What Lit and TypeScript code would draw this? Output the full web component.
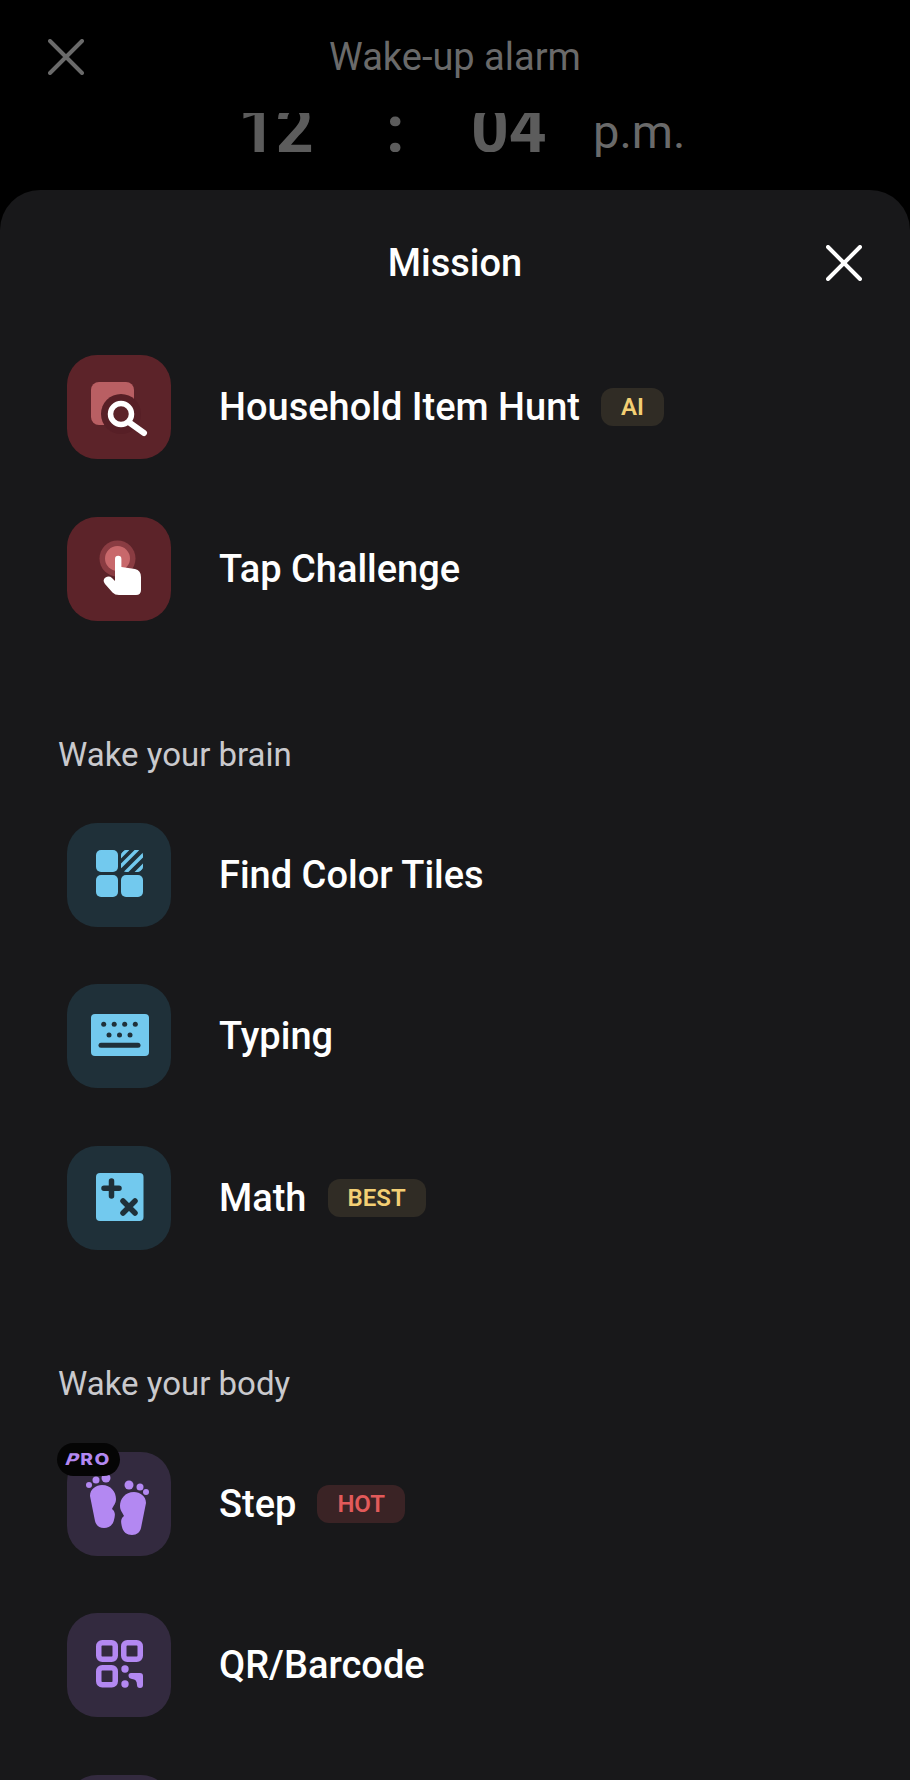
import { LitElement, html, css, svg } from "lit";
import { customElement } from "lit/decorators.js";

const X = html`<svg viewBox="0 0 36 36" width="36" height="36"><path d="M2 2 L34 34 M34 2 L2 34" fill="none" stroke="currentColor" stroke-width="4" stroke-linecap="round"/></svg>`;

const icons: Record<string, unknown> = {
  hunt: svg`
    <rect x="24" y="27" width="43" height="43" rx="8" fill="#b95f63"/>
    <circle cx="54" cy="59" r="20" fill="#571f26"/>
    <circle cx="54" cy="59" r="10.5" fill="#5c2329" stroke="#fff" stroke-width="5.5"/>
    <path d="M63 68 L77 78" stroke="#fff" stroke-width="6" stroke-linecap="round"/>`,
  tap: svg`
    <circle cx="50.5" cy="41.5" r="18" fill="#8a3c42"/>
    <circle cx="50.5" cy="41.5" r="12.5" fill="#c8686b"/>
    <path d="M48 42 a3.2 3.2 0 0 1 6.4 0 V50 L68 52 Q74 53.5 74 60 V73 Q74 78 69 78 H52 Q48 78 45.5 75.5 L38 67 Q35 63 38.5 60.5 Q42 58.5 45 61 L48 64 Z" fill="#fff"/>`,
  tiles: svg`
    <defs><clipPath id="st"><rect x="54" y="27" width="22" height="22" rx="5"/></clipPath></defs>
    <rect x="29" y="27" width="22" height="22" rx="5" fill="#72c9ee"/>
    <rect x="29" y="52" width="22" height="22" rx="5" fill="#72c9ee"/>
    <rect x="54" y="52" width="22" height="22" rx="5" fill="#72c9ee"/>
    <g clip-path="url(#st)" stroke="#72c9ee" stroke-width="3.4">
      <path d="M50 37 L62 25 M53 44 L72 25 M58 50 L80 28 M67 52 L80 39"/>
    </g>`,
  keys: svg`
    <rect x="24" y="30" width="58" height="42" rx="4" fill="#72c9ee"/>
    <g fill="#1f3039">
      <circle cx="36.7" cy="40.3" r="2.5"/><circle cx="47.2" cy="40.3" r="2.5"/><circle cx="57.7" cy="40.3" r="2.5"/><circle cx="68.3" cy="40.3" r="2.5"/>
      <circle cx="42" cy="51" r="2.5"/><circle cx="52.5" cy="51" r="2.5"/><circle cx="63" cy="51" r="2.5"/>
    </g>
    <path d="M34 61.3 H71" stroke="#1f3039" stroke-width="5" stroke-linecap="round"/>`,
  math: svg`
    <rect x="29" y="27" width="47.5" height="48" rx="4" fill="#72c9ee"/>
    <path d="M37 42.3 H52 M44.5 35 V50" stroke="#1f3039" stroke-width="5.5" stroke-linecap="round"/>
    <path d="M56 55 L68 67 M68 55 L56 67" stroke="#1f3039" stroke-width="5.5" stroke-linecap="round"/>`,
  step: svg`
    <g fill="#b388f2">
      <path d="M23 44 C23 37 29 33 35 33 C44 33 49 40 49 47 C49 52 46 54 45 57 C49 60 48 64 47 68 C46 73 42 76 37 76 C32 76 29 73 28 69 Z"/>
      <path transform="translate(102,7) scale(-1,1)" d="M23 44 C23 37 29 33 35 33 C44 33 49 40 49 47 C49 52 46 54 45 57 C49 60 48 64 47 68 C46 73 42 76 37 76 C32 76 29 73 28 69 Z"/>
      <circle cx="39" cy="26" r="4.5"/><circle cx="29" cy="28" r="3.5"/><circle cx="22" cy="33" r="3"/>
      <circle cx="62" cy="33" r="4.5"/><circle cx="73" cy="35" r="3.5"/><circle cx="79" cy="40" r="3"/>
    </g>`,
  qr: svg`
    <g fill="none" stroke="#b388f2" stroke-width="5.5">
      <rect x="31.75" y="29.75" width="16.5" height="16.5" rx="3.5"/>
      <rect x="56.75" y="29.75" width="16.5" height="16.5" rx="3.5"/>
      <rect x="31.75" y="54.75" width="16.5" height="17" rx="3.5"/>
    </g>
    <g fill="#b388f2">
      <circle cx="58" cy="56" r="3.7"/><circle cx="58" cy="71" r="3.7"/>
      <path d="M64 60 H73 Q76 60 76 63 V72 Q76 75 73 75 Q70 75 70 72 Q70 66 65 66 Q61.5 65.5 61.5 62.5 Q61.5 60 64 60Z"/>
    </g>`,
};

type Row = { name: string; icon: string; tone: string; badge?: string; badgeTone?: string; pro?: boolean };
type Group = { heading?: string; rows: Row[] };

const groups: Group[] = [
  { rows: [
    { name: "Household Item Hunt", icon: "hunt", tone: "red", badge: "AI", badgeTone: "gold" },
    { name: "Tap Challenge", icon: "tap", tone: "red" },
  ]},
  { heading: "Wake your brain", rows: [
    { name: "Find Color Tiles", icon: "tiles", tone: "blue" },
    { name: "Typing", icon: "keys", tone: "blue" },
    { name: "Math", icon: "math", tone: "blue", badge: "BEST", badgeTone: "gold" },
  ]},
  { heading: "Wake your body", rows: [
    { name: "Step", icon: "step", tone: "purple", badge: "HOT", badgeTone: "hot", pro: true },
    { name: "QR/Barcode", icon: "qr", tone: "purple" },
    { name: "", icon: "", tone: "purple" },
  ]},
];

@customElement("app-root")
export class AppRoot extends LitElement {
  static styles = css`
    :host { display: block; width: 910px; height: 1780px; overflow: hidden; background: #000; font-family: Roboto, "Noto Sans", sans-serif; }
    .top { height: 190px; overflow: hidden; color: #6a6a6a; }
    .bar { display: grid; grid-template-columns: 48px 1fr 48px; align-items: center; padding: 39px 48px 0; height: 36px; }
    .bar svg { display: block; }
    .bar h1 { margin: 0; text-align: center; font-weight: 400; font-size: 38px; line-height: 36px; }
    .wheel { margin-top: 38px; height: 39px; display: flex; align-items: flex-end; }
    .num { height: 39px; overflow: hidden; display: flex; align-items: flex-end; font-weight: 700; font-size: 66px; line-height: 45px; color: #5c5c5c; white-space: nowrap; }
    .h { margin-left: 238px; width: 148px; }
    .c { width: 85px; }
    .m { width: 122px; }
    .ap { font-size: 47px; line-height: 44px; color: #6a6a6a; margin-bottom: -2px; }
    .sheet { background: #18181a; border-radius: 40px 40px 0 0; height: 1590px; padding: 55px 0 0 67px; box-sizing: border-box; }
    .head { display: flex; justify-content: center; align-items: center; height: 36px; color: #fff; position: relative; margin-left: -67px; }
    .head h2 { margin: 0; font-size: 38px; line-height: 36px; font-weight: 500; }
    .head svg { position: absolute; right: 48px; top: 0; }
    .group { margin-top: 114.5px; }
    .g0 { margin-top: 74.3px; }
    .heading { margin: 0 0 49px -9px; color: #c9c9cd; font-size: 33px; line-height: 38px; font-weight: 400; }
    .rows { display: flex; flex-direction: column; gap: 57.8px; }
    .row { display: flex; align-items: center; height: 104px; }
    .tile { width: 104px; height: 104px; border-radius: 30px; position: relative; flex: none; margin-right: 48px; }
    .tile svg { display: block; }
    .red { background: #5c2329; }
    .blue { background: #1f3039; }
    .purple { background: #332a3f; }
    .name { color: #fff; font-size: 38px; font-weight: 500; line-height: 44px; white-space: nowrap; }
    .badge { margin-left: 21px; height: 38px; line-height: 38px; padding: 0 20px; border-radius: 12px; font-size: 24px; font-weight: 600; }
    .gold { background: #302c25; color: #f3cf74; }
    .hot { background: #3a2325; color: #e25a5a; }
    .pro { position: absolute; left: -10px; top: -9px; width: 63px; height: 33px; border-radius: 16.5px; background: #050505; color: #b388f2; font-family: Inter, sans-serif; line-height: 33px; text-align: center; }
    .pro span { display: inline-block; font-size: 16px; font-weight: 800; letter-spacing: 1.2px; transform: scaleX(1.2); }
    .pro i { display: inline-block; transform: skewX(-18deg); font-style: normal; }
  `;

  render() {
    return html`
      <div class="top">
        <div class="bar">${X}<h1>Wake-up alarm</h1><span></span></div>
        <div class="wheel">
          <div class="num h">12</div>
          <div class="num c">:</div>
          <div class="num m">04</div>
          <div class="ap">p.m.</div>
        </div>
      </div>
      <div class="sheet">
        <div class="head"><h2>Mission</h2>${X}</div>
        ${groups.map((g, i) => html`
          <div class="group g${i}">
            ${g.heading ? html`<h3 class="heading">${g.heading}</h3>` : ""}
            <div class="rows">
              ${g.rows.map((r) => html`
                <div class="row">
                  <div class="tile ${r.tone}">
                    ${r.icon ? html`<svg viewBox="0 0 104 104" width="104" height="104">${icons[r.icon]}</svg>` : ""}
                    ${r.pro ? html`<div class="pro"><span><i>P</i>RO</span></div>` : ""}
                  </div>
                  <div class="name">${r.name}</div>
                  ${r.badge ? html`<div class="badge ${r.badgeTone}">${r.badge}</div>` : ""}
                </div>`)}
            </div>
          </div>`)}
      </div>
    `;
  }
}
